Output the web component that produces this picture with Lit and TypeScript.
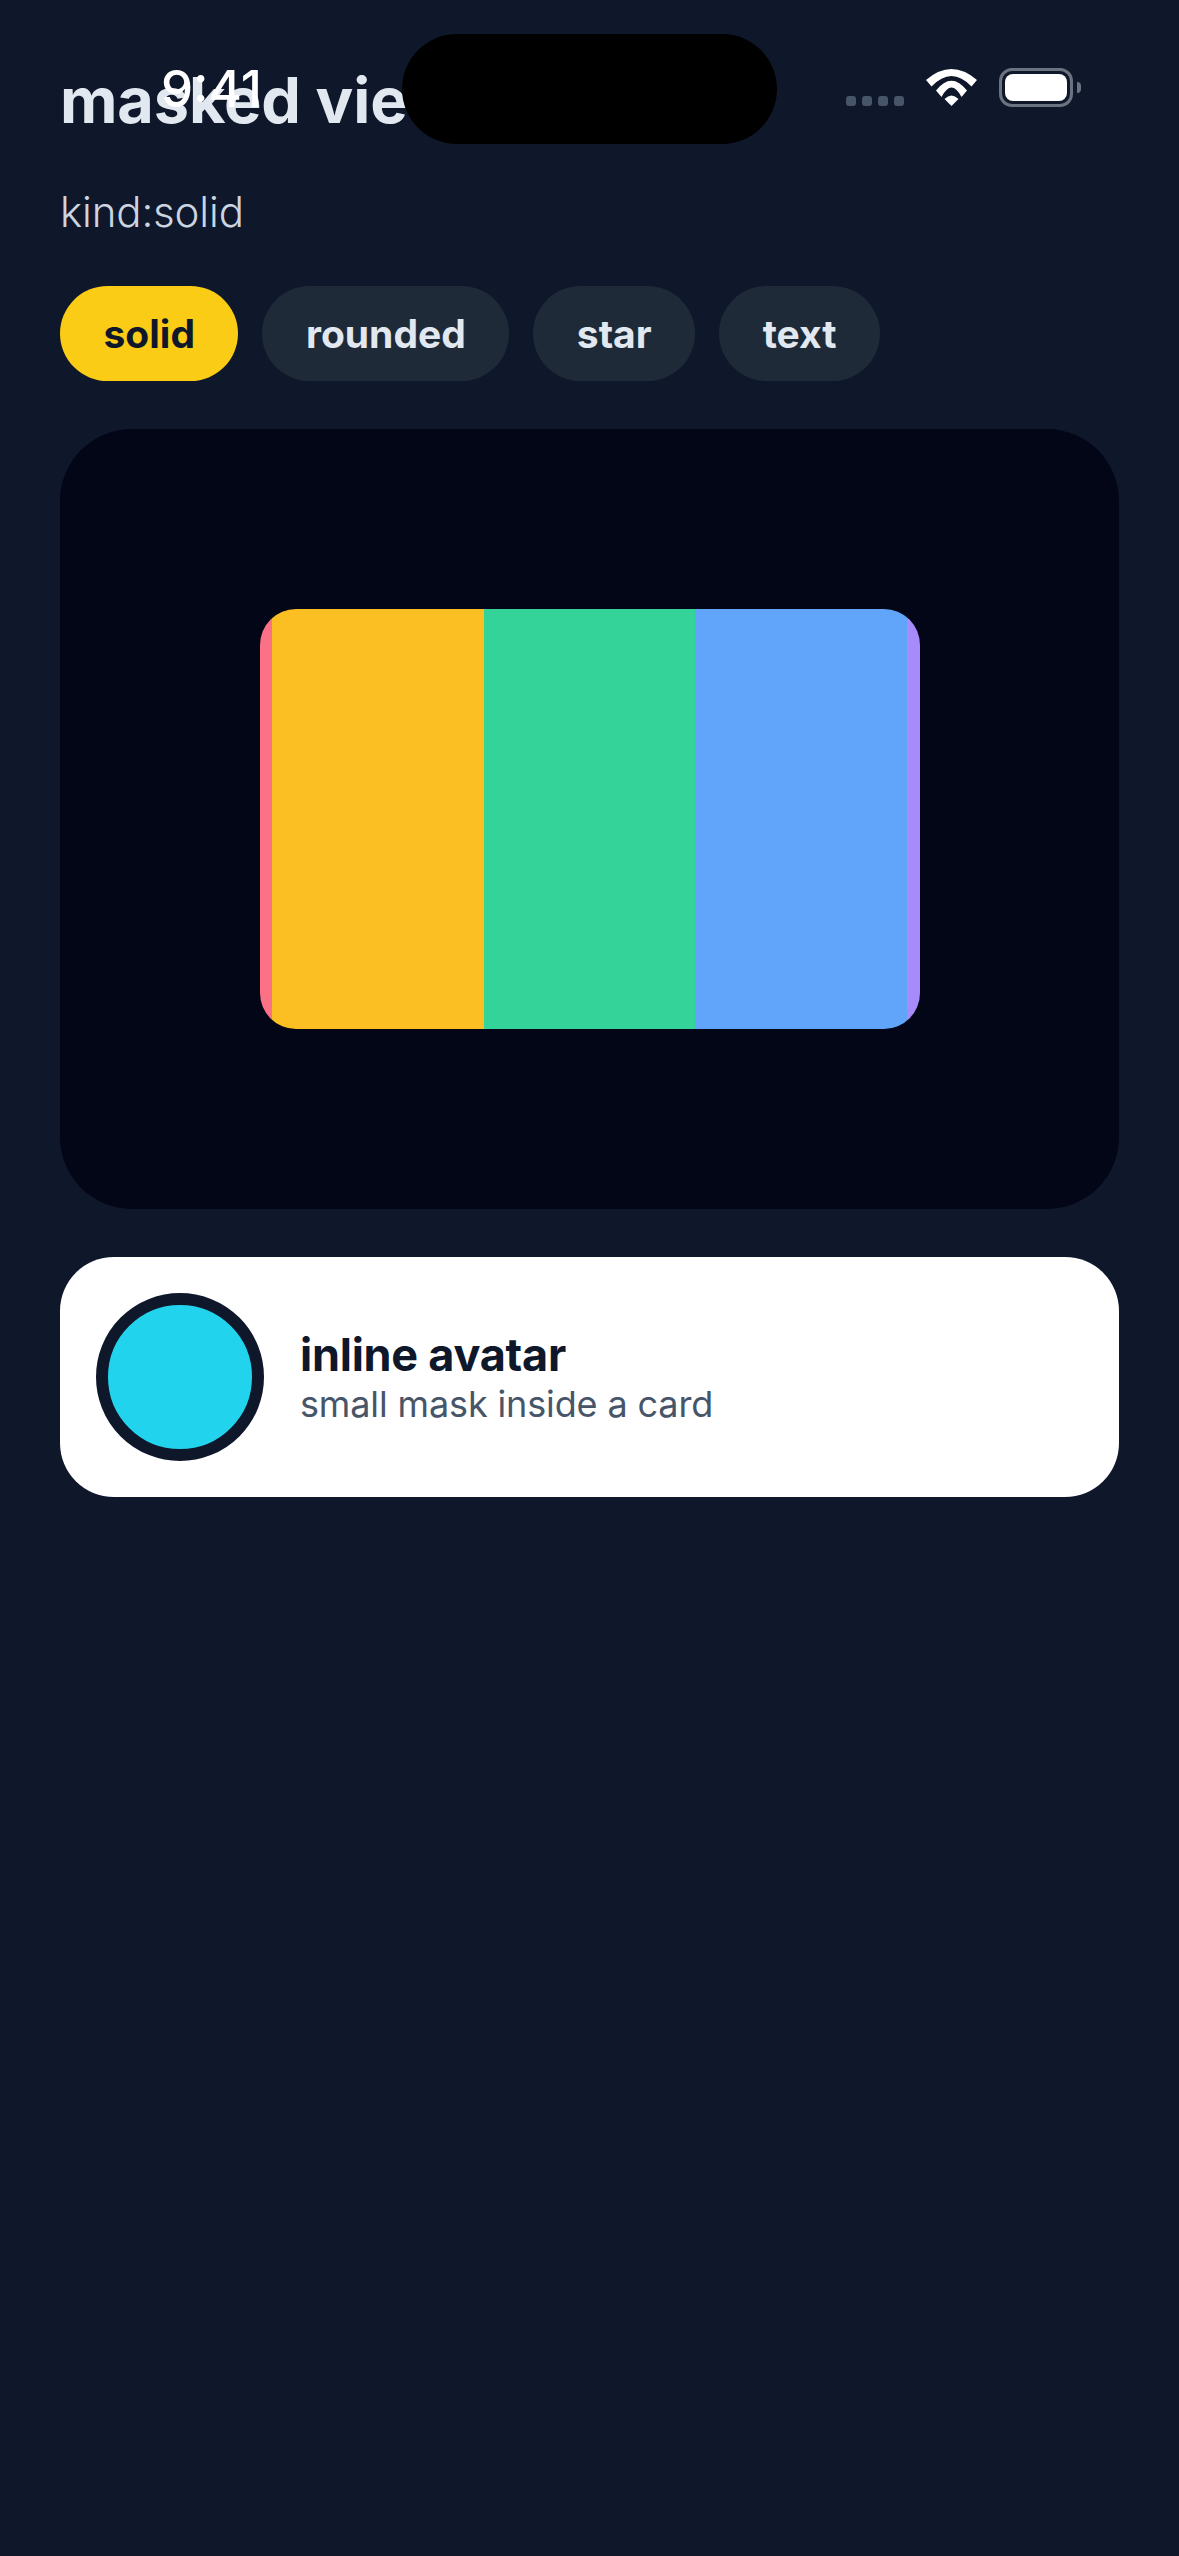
import { LitElement, html, css } from "lit";
import { customElement } from "lit/decorators.js";

@customElement("app-root")
export class AppRoot extends LitElement {
  static styles = css`
    :host {
      display: block;
      position: relative;
      width: 1179px;
      height: 2556px;
      overflow: hidden;
      background: #0f172a;
      font-family: Inter, "Liberation Sans", sans-serif;
    }
    .status {
      position: absolute;
      inset: 0 0 auto 0;
      height: 170px;
    }
    .time {
      position: absolute;
      left: 161px;
      top: 63px;
      font-size: 51px;
      line-height: 52px;
      font-weight: 500;
      color: #fff;
    }
    .island {
      position: absolute;
      left: 402px;
      top: 34px;
      width: 375px;
      height: 110px;
      border-radius: 55px;
      background: #000;
    }
    .dots {
      position: absolute;
      left: 846px;
      top: 96px;
      display: flex;
      gap: 6px;
    }
    .dots i {
      width: 10px;
      height: 10px;
      border-radius: 3px;
      background: #475569;
    }
    .wifi {
      position: absolute;
      left: 926px;
      top: 69px;
      width: 51px;
      height: 37px;
    }
    .battery {
      position: absolute;
      left: 999px;
      top: 68px;
      width: 74px;
      height: 39px;
      box-sizing: border-box;
      border: 3px solid #6b7280;
      border-radius: 13px;
      padding: 3px;
    }
    .battery b {
      display: block;
      height: 100%;
      border-radius: 8px;
      background: #fff;
    }
    .cap {
      position: absolute;
      left: 1077px;
      top: 82px;
      width: 4px;
      height: 11px;
      border-radius: 0 4px 4px 0;
      background: #6b7280;
    }
    .page {
      padding: 60px 60px 0;
      display: flex;
      flex-direction: column;
    }
    h1 {
      margin: 0;
      font-size: 63px;
      line-height: 80px;
      font-weight: 700;
      letter-spacing: -0.15px;
      color: #e2e8f0;
      white-space: nowrap;
    }
    .sub {
      margin-top: 47px;
      font-size: 42px;
      line-height: 50px;
      font-weight: 300;
      letter-spacing: -0.15px;
      color: #cbd5e1;
    }
    .chips {
      margin-top: 49px;
      display: flex;
      gap: 24px;
    }
    .chip {
      height: 95px;
      padding: 0 43.5px;
      display: flex;
      align-items: center;
      border-radius: 48px;
      background: #1e2a38;
      color: #e2e8f0;
      font-size: 39px;
      font-weight: 700;
    }
    .chip.on {
      background: #facc15;
      color: #0f172a;
    }
    .stage {
      margin-top: 48px;
      height: 780px;
      border-radius: 72px;
      background: #020617;
      display: flex;
      align-items: center;
      justify-content: center;
    }
    .mask {
      width: 660px;
      height: 420px;
      border-radius: 36px;
      overflow: hidden;
      display: flex;
      justify-content: center;
    }
    .mask i {
      flex: 0 0 211.5px;
    }
    .card {
      margin-top: 48px;
      height: 240px;
      box-sizing: border-box;
      padding: 0 36px;
      border-radius: 54px;
      background: #fff;
      display: flex;
      align-items: center;
      gap: 36px;
    }
    .avatar {
      width: 168px;
      height: 168px;
      box-sizing: border-box;
      border: 12px solid #0f172a;
      border-radius: 50%;
      background: #22d3ee;
    }
    .text {
      padding-top: 3px;
    }
    .name {
      font-size: 45px;
      line-height: 50px;
      font-weight: 700;
      letter-spacing: -0.25px;
      color: #0f172a;
    }
    .desc {
      font-size: 36px;
      line-height: 48px;
      letter-spacing: -0.13px;
      color: #475569;
    }
  `;

  render() {
    const kinds = ["solid", "rounded", "star", "text"];
    const stripes = ["#fb7185", "#fbbf24", "#34d399", "#60a5fa", "#a78bfa"];
    return html`
      <div class="page">
        <h1>masked view</h1>
        <div class="sub">kind:solid</div>
        <div class="chips">
          ${kinds.map((k, i) => html`<div class="chip ${i === 0 ? "on" : ""}">${k}</div>`)}
        </div>
        <div class="stage">
          <div class="mask">
            ${stripes.map((c) => html`<i style="background:${c}"></i>`)}
          </div>
        </div>
        <div class="card">
          <div class="avatar"></div>
          <div class="text">
            <div class="name">inline avatar</div>
            <div class="desc">small mask inside a card</div>
          </div>
        </div>
      </div>
      <div class="status">
        <div class="time">9:41</div>
        <div class="island"></div>
        <div class="dots"><i></i><i></i><i></i><i></i></div>
        <svg class="wifi" viewBox="0 0 51 37" fill="#fff">
          <path d="M0 11Q25.5-11 51 11L45.5 17.5Q25.5-3.5 5.5 17.5Z" />
          <path d="M10 21.5Q25.5 2 41 21.5L35.5 28Q25.5 9 15.5 28Z" />
          <path d="M18.5 30Q25.5 23 32.5 30L25.5 37Z" />
        </svg>
        <div class="battery"><b></b></div>
        <div class="cap"></div>
      </div>
    `;
  }
}
